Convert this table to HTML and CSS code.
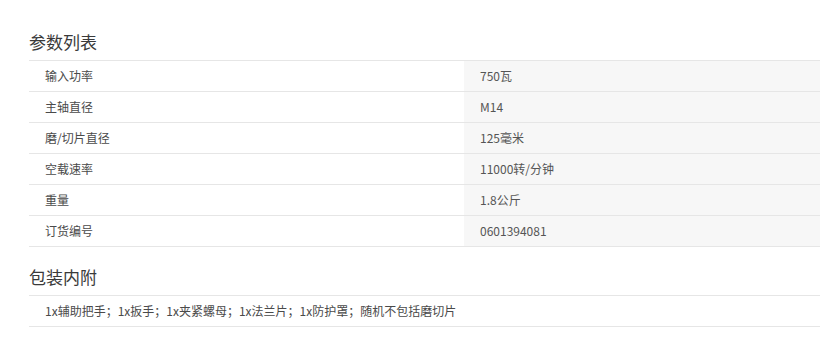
FILE: index.html
```html
<!DOCTYPE html>
<html lang="zh-CN">
<head>
<meta charset="utf-8">
<title>参数列表</title>
<link rel="stylesheet" href="styles.css">
</head>
<body>
<div class="page">
  <h2 class="title first">参数列表</h2>
  <div class="specs">
    <div class="row"><div class="k">输入功率</div><div class="v">750瓦</div></div>
    <div class="row"><div class="k">主轴直径</div><div class="v">M14</div></div>
    <div class="row"><div class="k">磨/切片直径</div><div class="v">125毫米</div></div>
    <div class="row"><div class="k">空载速率</div><div class="v">11000转/分钟</div></div>
    <div class="row"><div class="k">重量</div><div class="v">1.8公斤</div></div>
    <div class="row"><div class="k">订货编号</div><div class="v">0601394081</div></div>
  </div>
  <h2 class="title second">包装内附</h2>
  <div class="specs">
    <div class="row"><div class="k full">1x辅助把手；1x扳手；1x夹紧螺母；1x法兰片；1x防护罩；随机不包括磨切片</div></div>
  </div>
</div>
</body>
</html>
```

FILE: styles.css
```css
html, body {
  margin: 0;
  padding: 0;
  background: #ffffff;
}
body {
  font-family: "Noto Sans CJK SC", "Liberation Sans", sans-serif;
  color: #333333;
}
.page {
  padding-left: 29px;
  width: 791px;
}
.title {
  margin: 0;
  font-weight: normal;
  font-size: 17px;
  line-height: 20px;
  color: #3a3a3a;
  padding-left: 0;
}
.title.first {
  padding-top: 32px;
  padding-bottom: 8px;
}
.title.second {
  padding-top: 20px;
  padding-bottom: 8px;
}
.specs {
  border-top: 1px solid #e6e6e6;
}
.row {
  display: flex;
  height: 30px;
  border-bottom: 1px solid #e6e6e6;
  font-size: 12px;
  line-height: 30px;
}
.k {
  width: 435px;
  padding-left: 16px;
  box-sizing: border-box;
  color: #4a4a4a;
}
.k.full {
  width: auto;
  flex: 1;
}
.v {
  flex: 1;
  background: #f7f7f7;
  padding-left: 16px;
  color: #555555;
}
```
